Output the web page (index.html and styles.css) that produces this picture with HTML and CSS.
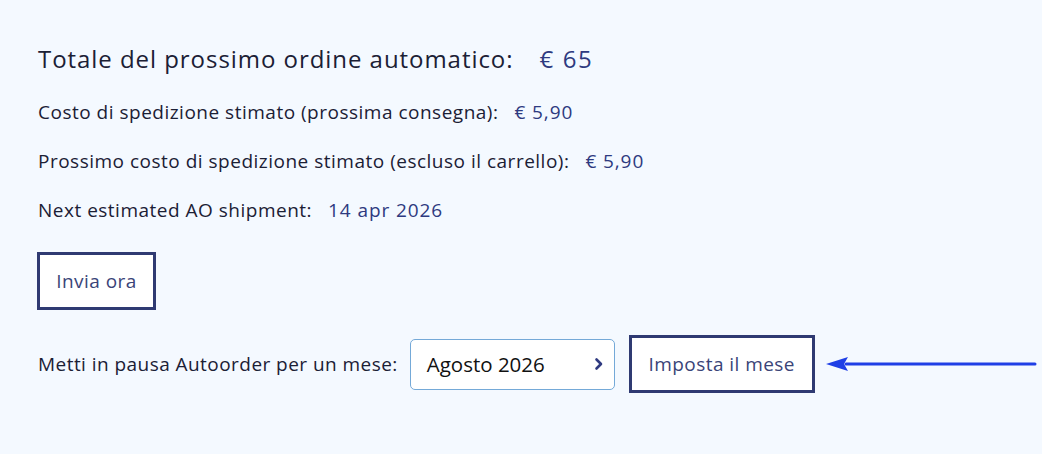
FILE: index.html
```html
<!DOCTYPE html>
<html lang="it">
<head>
<meta charset="utf-8">
<link rel="stylesheet" href="styles.css">
</head>
<body>
<main class="panel">
  <h2 class="total"><span class="label">Totale del prossimo ordine automatico:</span><span class="value">€ 65</span></h2>
  <p class="line"><span class="label">Costo di spedizione stimato (prossima consegna):</span><span class="value">€ 5,90</span></p>
  <p class="line"><span class="label">Prossimo costo di spedizione stimato (escluso il carrello):</span><span class="value">€ 5,90</span></p>
  <p class="line"><span class="label">Next estimated AO shipment:</span><span class="value">14 apr 2026</span></p>
  <div class="send-row"><button class="btn btn-send">Invia ora</button></div>
  <div class="pause-row">
    <span class="label">Metti in pausa Autoorder per un mese:</span>
    <div class="select">
      <span>Agosto 2026</span>
      <svg class="chev" width="10" height="14" viewBox="0 0 10 14"><path d="M2.5 2.5 L7 7 L2.5 11.5" fill="none" stroke="#2f3a80" stroke-width="2.6" stroke-linecap="round" stroke-linejoin="round"/></svg>
    </div>
    <div class="btn-wrap">
      <button class="btn btn-set">Imposta il mese</button>
      <svg class="arrow" width="212" height="20" viewBox="0 0 212 20"><path d="M20 10 H209" stroke="#1f3fe6" stroke-width="3" stroke-linecap="round"/><path d="M0 10 L22 3 L18 10 L22 17 Z" fill="#1f3fe6"/></svg>
    </div>
  </div>
</main>
</body>
</html>
```
FILE: styles.css
```css
html, body {
  margin: 0;
  padding: 0;
  background: #f4f9ff;
}
body {
  font-family: "Open Sans", "Noto Sans", sans-serif;
  color: #1b2035;
  width: 1042px;
  height: 454px;
  overflow: hidden;
}
.panel {
  padding: 43px 0 0 38px;
  display: flex;
  flex-direction: column;
  align-items: flex-start;
}
.total {
  margin: 0;
  font-size: 24px;
  letter-spacing: 0.95px;
  font-weight: 400;
  line-height: 32px;
  display: flex;
  gap: 26px;
}
.total .value { letter-spacing: 1.6px; }
.value {
  color: #2e3a80;
}
.line {
  margin: 0;
  font-size: 19px;
  letter-spacing: 0.5px;
  line-height: 24px;
  display: flex;
  gap: 16px;
}
.line .value { letter-spacing: 0.9px; }
.total + .line { margin-top: 25px; }
.line + .line { margin-top: 25px; }
.send-row { margin-top: 30px; margin-left: -1px; }
.btn {
  font-family: inherit;
  font-size: 19px;
  letter-spacing: 0.45px;
  color: #3a4478;
  background: #ffffff;
  border: 3px solid #2f3a72;
  border-radius: 0;
  height: 58px;
  cursor: pointer;
  padding: 0;
}
.btn-send { width: 119px; }
.pause-row {
  margin-top: 25px;
  display: flex;
  align-items: center;
  font-size: 19px;
  letter-spacing: 0.45px;
}
.pause-row .label { margin-right: 12px; }
.select {
  width: 205px;
  height: 51px;
  box-sizing: border-box;
  border: 1px solid #74a9d8;
  border-radius: 5px;
  background: #fff;
  display: flex;
  align-items: center;
  justify-content: space-between;
  padding: 0 10px 0 16px;
  font-family: "Open Sans", sans-serif;
  font-size: 20.5px;
  letter-spacing: 0;
  color: #111;
  margin-right: 14px;
}
.chev { display: block; }
.btn-wrap {
  display: flex;
  align-items: center;
  gap: 11px;
}
.btn-set { width: 186px; }
.arrow { display: block; }
```
